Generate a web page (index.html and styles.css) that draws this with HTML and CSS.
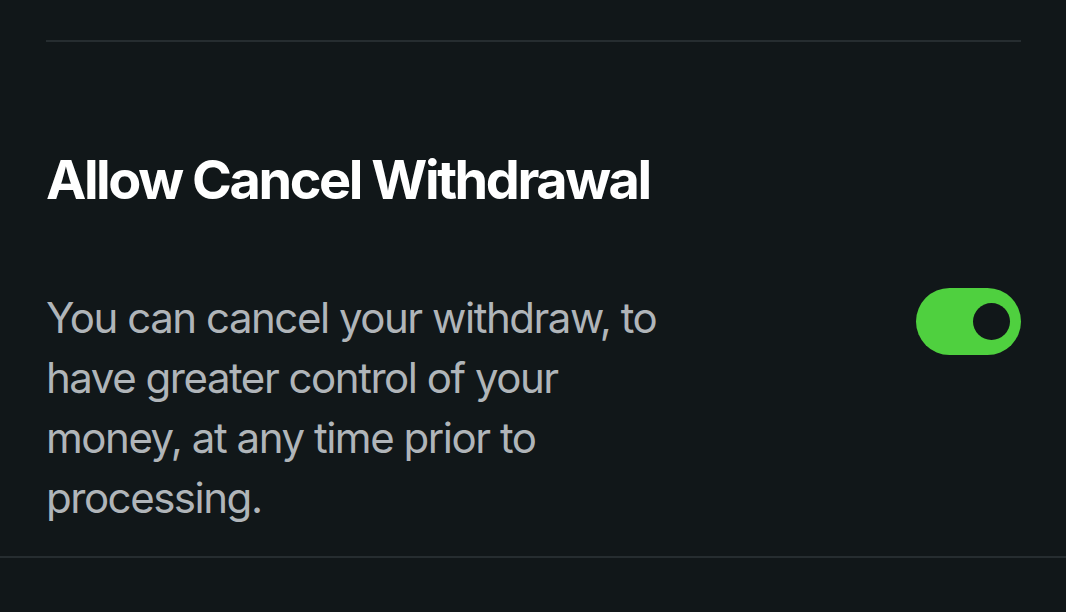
FILE: index.html
```html
<!DOCTYPE html>
<html lang="en">
<head>
  <meta charset="UTF-8">
  <meta name="viewport" content="width=device-width, initial-scale=1.0">
  <title>Withdrawal Settings</title>
  <link rel="stylesheet" href="styles.css">
</head>
<body>

  <div class="settings">
    <hr class="divider">

    <div class="setting">
      <h2 class="setting-title">Allow Cancel Withdrawal</h2>
      <div class="setting-row">
        <p class="setting-desc">You can cancel your withdraw, to have greater control of your money, at any time prior to processing.</p>
        <label class="toggle">
          <input type="checkbox" checked>
          <span class="toggle-track"><span class="toggle-knob"></span></span>
        </label>
      </div>
    </div>
  </div>

  <hr class="divider-full">

</body>
</html>
```

FILE: styles.css
```css
body {
  margin: 0;
  background-color: #111719;
  color: #ffffff;
  font-family: Inter, "Noto Sans", sans-serif;
  height: 612px;
  overflow: hidden;
}
.settings {
  padding: 40px 45px 0 46px;
}
.divider {
  margin: 0;
  border: none;
  border-top: 2px solid #262d30;
}
.divider-full {
  margin: 0;
  border: none;
  border-top: 2px solid #262d30;
}
.setting-title {
  margin: 106px 0 0;
  font-size: 54px;
  font-weight: 700;
  line-height: 64px;
  letter-spacing: -0.045em;
}
.setting-row {
  display: flex;
  justify-content: space-between;
  align-items: flex-start;
  margin-top: 76px;
}
.setting-desc {
  margin: 0 0 28px;
  max-width: 625px;
  font-size: 42px;
  line-height: 60px;
  color: #b0b5b9;
  letter-spacing: -0.035em;
}
.toggle { position: relative; display: block; cursor: pointer; }
.toggle input { display: none; }
.toggle-track {
  display: flex;
  align-items: center;
  justify-content: flex-end;
  width: 105px;
  height: 67px;
  padding: 0 11px;
  box-sizing: border-box;
  border-radius: 34px;
  background-color: #4fd03f;
}
.toggle-knob {
  width: 37px;
  height: 37px;
  border-radius: 50%;
  background-color: #111719;
}
```
